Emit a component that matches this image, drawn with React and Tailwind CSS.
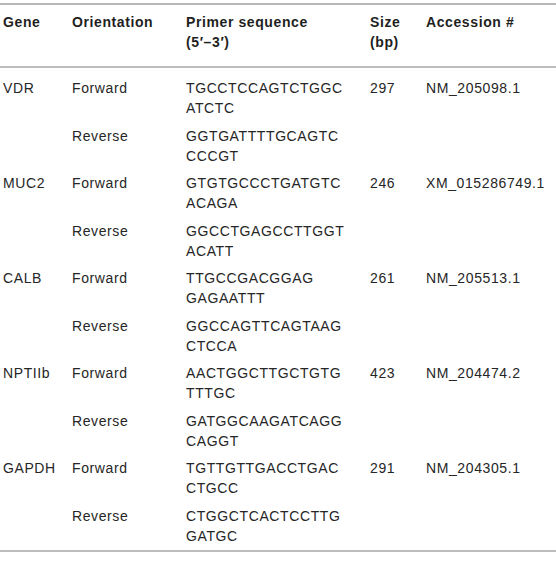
const rows = [
  { gene: "VDR", dir: "Forward", seq: ["TGCCTCCAGTCTGGC", "ATCTC"], size: "297", acc: "NM_205098.1" },
  { gene: "", dir: "Reverse", seq: ["GGTGATTTTGCAGTC", "CCCGT"], size: "", acc: "" },
  { gene: "MUC2", dir: "Forward", seq: ["GTGTGCCCTGATGTC", "ACAGA"], size: "246", acc: "XM_015286749.1" },
  { gene: "", dir: "Reverse", seq: ["GGCCTGAGCCTTGGT", "ACATT"], size: "", acc: "" },
  { gene: "CALB", dir: "Forward", seq: ["TTGCCGACGGAG", "GAGAATTT"], size: "261", acc: "NM_205513.1" },
  { gene: "", dir: "Reverse", seq: ["GGCCAGTTCAGTAAG", "CTCCA"], size: "", acc: "" },
  { gene: "NPTIIb", dir: "Forward", seq: ["AACTGGCTTGCTGTG", "TTTGC"], size: "423", acc: "NM_204474.2" },
  { gene: "", dir: "Reverse", seq: ["GATGGCAAGATCAGG", "CAGGT"], size: "", acc: "" },
  { gene: "GAPDH", dir: "Forward", seq: ["TGTTGTTGACCTGAC", "CTGCC"], size: "291", acc: "NM_204305.1" },
  { gene: "", dir: "Reverse", seq: ["CTGGCTCACTCCTTG", "GATGC"], size: "", acc: "" },
];

function App() {
  return (
    <div className="flex w-[556px] flex-col bg-white pt-[3px] font-['Liberation_Sans',Arial,sans-serif] text-[14px] leading-[20px] tracking-[0.6px] text-[#262626]">
      {/* top rule */}
      <div className="h-[2px] w-full shrink-0 bg-[#b8b8b8]" />
      <table className="w-full table-fixed border-collapse">
        <colgroup>
          <col className="w-[69px]" />
          <col className="w-[114px]" />
          <col className="w-[184px]" />
          <col className="w-[56px]" />
          <col />
        </colgroup>
        <thead>
          <tr className="border-b-2 border-[#bdbdbd] text-left align-top font-bold text-[#1f1f1f]">
            <th className="pl-[3px] pt-[7px] pb-[14px]">Gene</th>
            <th className="pl-[3px] pt-[7px] pb-[14px]">Orientation</th>
            <th className="pl-[3px] pt-[7px] pb-[14px]">
              <span className="block">Primer sequence</span>
              <span className="block">(5′–3′)</span>
            </th>
            <th className="pl-[3px] pt-[7px] pb-[14px]">
              <span className="block">Size</span>
              <span className="block">(bp)</span>
            </th>
            <th className="pl-[3px] pt-[7px] pb-[14px]">Accession #</th>
          </tr>
        </thead>
        <tbody className="border-b-2 border-[#bdbdbd]">
          {rows.map((r, i) => {
            const pad = i === 0 ? "pt-[10px] pb-[3.5px]" : i === rows.length - 1 ? "pt-[4px] pb-[4px]" : "pt-[4px] pb-[3.5px]";
            return (
              <tr key={i} className="align-top">
                <td className={`pl-[3px] ${pad}`}>{r.gene}</td>
                <td className={`pl-[3px] ${pad}`}>{r.dir}</td>
                <td className={`pl-[3px] ${pad}`}>
                  <span className="block">{r.seq[0]}</span>
                  <span className="block">{r.seq[1]}</span>
                </td>
                <td className={`pl-[3px] ${pad}`}>{r.size}</td>
                <td className={`pl-[3px] ${pad}`}>{r.acc}</td>
              </tr>
            );
          })}
        </tbody>
      </table>
    </div>
  );
}

export default App;
